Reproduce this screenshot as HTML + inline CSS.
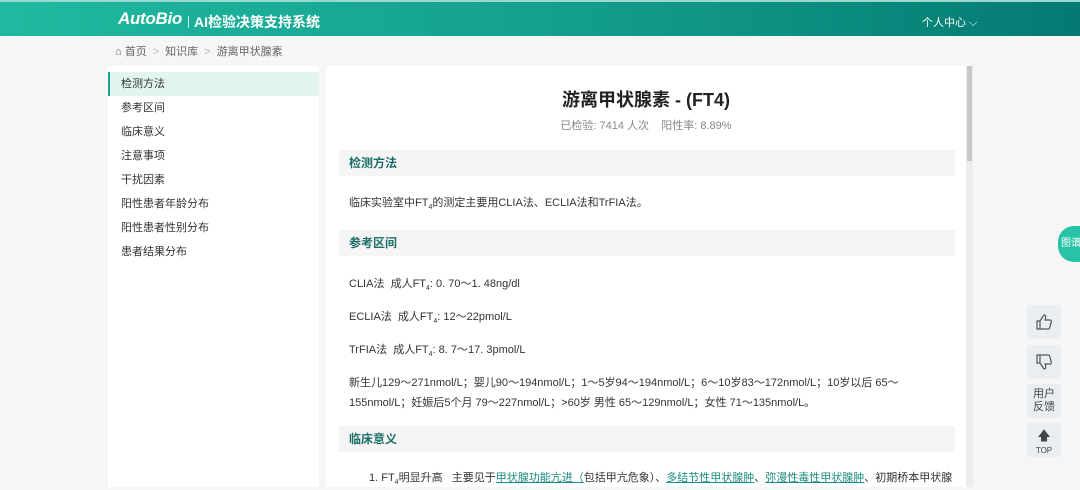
<!DOCTYPE html><html><head><meta charset="utf-8"><style>
*{margin:0;padding:0;box-sizing:border-box}
body{width:1080px;height:490px;overflow:hidden;background:#f6f6f6;font-family:"Liberation Sans","Noto Sans CJK SC",sans-serif;color:#333;position:relative}
.hd{position:absolute;left:0;top:0;width:1080px;height:36px;background:linear-gradient(90deg,#20b9a0,#14a08e 50%,#047a72);border-top:2px solid #9ad9cf}
.logo{position:absolute;left:118px;top:7px;color:#fff;font-size:17px;font-weight:bold;font-style:italic;letter-spacing:-0.3px}
.ttl{position:absolute;left:194px;top:10px;color:#fff;font-size:14px;font-weight:bold}
.sep{position:absolute;left:188px;top:14px;width:1px;height:12px;background:#d0f0ea}
.me{position:absolute;left:922px;top:12px;color:#fff;font-size:11px}
.bc{position:absolute;left:115px;top:43px;font-size:11px;color:#666}
.bc span{color:#bbb;margin:0 6px}
.sb{position:absolute;left:108px;top:66px;width:211px;height:421px;background:#fff}
.sb div{height:24px;line-height:24px;padding-left:13px;font-size:11px;color:#333}
.sb .on{background:#e2f5f1;border-left:2px solid #20a38e;padding-left:11px;margin-top:6px}
.ct{position:absolute;left:326px;top:66px;width:640px;height:421px;background:#fff;overflow:hidden}
.scr{position:absolute;left:966px;top:66px;width:7px;height:421px;background:#ededed}
.scr i{position:absolute;left:1px;top:0;width:5px;height:95px;background:#c8c8c8}
h1{position:absolute;top:20px;width:100%;text-align:center;font-size:18px;font-weight:bold;color:#222}
.st{position:absolute;top:51px;width:100%;text-align:center;font-size:11px;color:#888}
.sh{position:absolute;left:13px;width:616px;height:26px;background:#f5f5f5;line-height:26px;padding-left:10px;font-size:12px;font-weight:bold;color:#1a6e66}
.p{position:absolute;left:23px;font-size:11px;color:#333;white-space:nowrap}
sub{font-size:7px}
.lk{color:#1a8c7d;text-decoration:underline}
.fb{position:absolute;left:1027px;width:34px;height:34px;background:#ebeef1;border-radius:3px;text-align:center;font-size:11px;color:#444;line-height:13px}
.tp{position:absolute;left:1058px;top:226px;width:30px;height:36px;background:#27c3a6;border-radius:16px 0 0 16px;color:#fff;font-size:10px;line-height:36px;padding-left:3px}
</style></head><body>
<div class="hd"><div class="logo">AutoBio</div><div class="sep"></div><div class="ttl">AI检验决策支持系统</div><div class="me">个人中心 ⌵</div></div>
<div class="bc">⌂ 首页<span>&gt;</span>知识库<span>&gt;</span>游离甲状腺素</div>
<div class="sb"><div class="on">检测方法</div><div>参考区间</div><div>临床意义</div><div>注意事项</div><div>干扰因素</div><div>阳性患者年龄分布</div><div>阳性患者性别分布</div><div>患者结果分布</div></div>
<div class="ct">
<h1>游离甲状腺素 - (FT4)</h1>
<div class="st">已检验: 7414 人次 &nbsp;&nbsp; 阳性率: 8.89%</div>
<div class="sh" style="top:84px">检测方法</div>
<div class="p" style="top:128px">临床实验室中FT<sub>4</sub>的测定主要用CLIA法、ECLIA法和TrFIA法。</div>
<div class="sh" style="top:164px">参考区间</div>
<div class="p" style="top:209px">CLIA法 &nbsp;成人FT<sub>4</sub>: 0. 70～1. 48ng/dl</div>
<div class="p" style="top:242px">ECLIA法 &nbsp;成人FT<sub>4</sub>: 12～22pmol/L</div>
<div class="p" style="top:275px">TrFIA法 &nbsp;成人FT<sub>4</sub>: 8. 7～17. 3pmol/L</div>
<div class="p" style="top:308px">新生儿129～271nmol/L；婴儿90～194nmol/L；1～5岁94～194nmol/L；6～10岁83～172nmol/L；10岁以后 65～</div>
<div class="p" style="top:328px">155nmol/L；妊娠后5个月 79～227nmol/L；&gt;60岁 男性 65～129nmol/L；女性 71～135nmol/L。</div>
<div class="sh" style="top:360px">临床意义</div>
<div class="p" style="top:403px;left:43px">1. FT<sub>4</sub>明显升高 &nbsp; 主要见于<span class="lk">甲状腺功能亢进（</span>包括甲亢危象）、<span class="lk">多结节性甲状腺肿</span>、<span class="lk">弥漫性毒性甲状腺肿</span>、初期桥本甲状腺</div>
</div>
<div class="scr"><i></i></div>
<div class="tp">图谱</div>
<div class="fb" style="top:305px"><svg width="20" height="20" viewBox="0 0 20 20" style="margin-top:7px" fill="none" stroke="#555" stroke-width="1.2"><path d="M3 9h3v8H3zM6 9l4-6c1.5 0 2 1 1.7 2.5L11 8h5c1 0 1.6.8 1.3 1.8l-1.6 6c-.3.8-1 1.2-1.8 1.2H6"/></svg></div>
<div class="fb" style="top:345px"><svg width="20" height="20" viewBox="0 0 20 20" style="margin-top:7px" fill="none" stroke="#555" stroke-width="1.2"><path d="M3 11h3V3H3zM6 11l4 6c1.5 0 2-1 1.7-2.5L11 12h5c1 0 1.6-.8 1.3-1.8l-1.6-6C15.4 3.4 14.7 3 13.9 3H6"/></svg></div>
<div class="fb" style="top:384px;padding-top:4px">用户<br>反馈</div>
<div class="fb" style="top:423px;font-size:8px;padding-top:6px"><span style="font-size:13px">🡅</span><br>TOP</div>
</body></html>
